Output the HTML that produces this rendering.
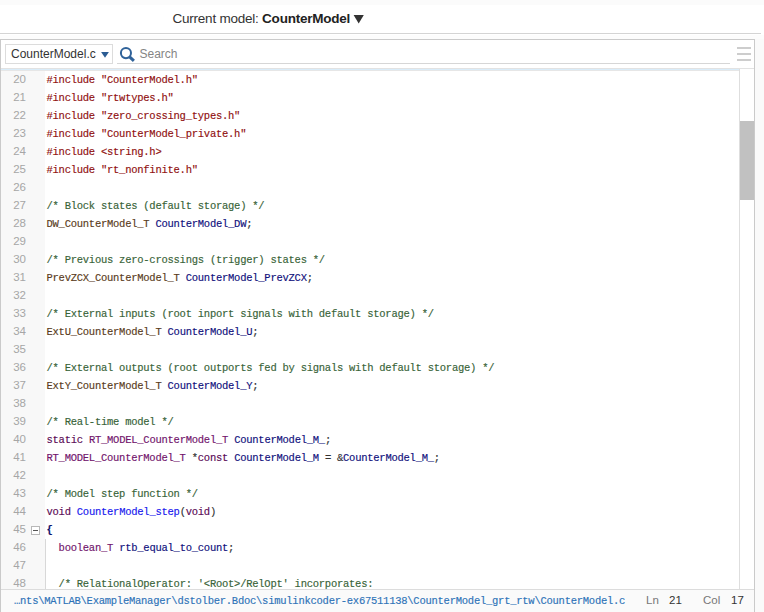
<!DOCTYPE html>
<html><head><meta charset="utf-8"><title>Code View</title>
<style>
html,body{margin:0;padding:0;}
body{width:764px;height:612px;overflow:hidden;background:#fff;position:relative;font-family:"Liberation Sans",sans-serif;}
.abs{position:absolute;}
#topband{left:0;top:0;width:764px;height:5px;background:#fbfbfb;}
#title{left:172.5px;top:11px;font-size:13.5px;letter-spacing:-0.23px;line-height:16px;color:#333;white-space:nowrap;}
#title b{color:#222;}
#hr1{left:0;top:33px;width:761px;height:1px;background:#d4d4d4;}
#band2{left:0;top:35px;width:764px;height:4px;background:#fcfcfc;}
#rightbg{left:755px;top:39px;width:9px;height:573px;background:#fafafa;}
#panel{left:0;top:39px;width:753px;height:580px;border:1px solid #cacaca;background:#fff;}
#sel{left:5px;top:44px;width:106px;height:18px;border:1px solid #dcdcdc;background:#fff;}
#seltx{left:11px;top:47px;font-size:12px;line-height:15px;color:#333;white-space:nowrap;}
#search{left:139.5px;top:47px;font-size:12px;line-height:15px;color:#858585;}
#sline{left:117px;top:63px;width:613px;height:1px;background:#d6d6d6;}
.hb{left:737px;width:14px;height:2px;background:#cdcdcd;}
#tb1{left:1px;top:68px;width:753px;height:1px;background:#e2e2e2;}
#tb2{left:1px;top:69px;width:738px;height:1px;background:#d9ecf9;}
#tb3{left:1px;top:70px;width:738px;height:1px;background:#e6e6e6;}
#gutter{left:1px;top:71px;width:44px;height:518px;background:#f8f8f8;}
#vr{left:739px;top:69px;width:1px;height:521px;background:#dedede;}
#thumb{left:740px;top:121px;width:14px;height:79px;background:#c1c1c1;}
#bl{left:1px;top:589px;width:753px;height:1px;background:#dcdcdc;}
#status{left:1px;top:590px;width:753px;height:22px;background:#fafafa;}
#code{left:1px;top:70.5px;width:738px;height:519px;overflow:hidden;}
.ln{position:relative;height:18px;line-height:18px;white-space:pre;}
.no{position:absolute;left:0;top:-1px;width:25px;text-align:right;font-family:"Liberation Sans",sans-serif;font-size:11.5px;color:#a6a6a6;}
.tx{position:absolute;left:45.5px;font-family:"Liberation Mono",monospace;font-size:10.5px;letter-spacing:-0.25px;-webkit-text-stroke:0.15px currentColor;}
.pp{color:#900f0f;}
.cm{color:#386338;}
.ty{color:#5a3c1c;}
.va{color:#10107c;}
.pl{color:#333;}
.br{color:#10106a;font-weight:bold;}
.kw{color:#5a0a56;}
.fn{color:#1818ee;}
.bt{color:#72146c;}
#fold{left:31px;top:526px;width:7px;height:7px;border:1px solid #b8b8b8;background:#fff;}
#foldm{left:33px;top:530px;width:5px;height:1px;background:#555;}
#guide{left:45px;top:539px;width:1px;height:50px;background:#d8d8d8;}
#path{left:14px;top:594px;font-family:"Liberation Mono",monospace;font-size:10.5px;letter-spacing:-0.25px;line-height:14px;color:#2e73b8;white-space:pre;-webkit-text-stroke:0.15px currentColor;}
.st{top:593px;font-size:11.5px;line-height:15px;white-space:nowrap;}
.sg{color:#777;}
.sd{color:#333;}
</style></head><body>
<div class="abs" id="topband"></div>
<div class="abs" id="title">Current model: <b>CounterModel</b></div>
<svg class="abs" style="left:353px;top:14px" width="12" height="10" viewBox="0 0 12 10"><path d="M0.6 1 L10.8 1 L5.7 9.4 Z" fill="#333"/></svg>
<div class="abs" id="hr1"></div>
<div class="abs" id="band2"></div>
<div class="abs" id="rightbg"></div>
<div class="abs" id="panel"></div>
<div class="abs" id="sel"></div>
<div class="abs" id="seltx">CounterModel.c</div>
<svg class="abs" style="left:100px;top:50px" width="10" height="9" viewBox="0 0 10 9"><path d="M1.1 2 L8.9 2 L5 7.8 Z" fill="#2b5c93"/></svg>
<svg class="abs" style="left:118px;top:45px" width="18" height="18" viewBox="0 0 18 18"><circle cx="7.95" cy="8.1" r="5.05" fill="none" stroke="#2f6299" stroke-width="2"/><path d="M11.6 11.8 L15.9 15.9" stroke="#2f6299" stroke-width="3" stroke-linecap="butt"/></svg>
<div class="abs" id="search">Search</div>
<div class="abs" id="sline"></div>
<div class="abs hb" style="top:47px"></div>
<div class="abs hb" style="top:53px"></div>
<div class="abs hb" style="top:59px"></div>
<div class="abs" id="tb1"></div>
<div class="abs" id="tb2"></div>
<div class="abs" id="tb3"></div>
<div class="abs" id="gutter"></div>
<div class="abs" id="code">
<div class="ln"><span class="no">20</span><span class="tx"><span class="pp">#include "CounterModel.h"</span></span></div>
<div class="ln"><span class="no">21</span><span class="tx"><span class="pp">#include "rtwtypes.h"</span></span></div>
<div class="ln"><span class="no">22</span><span class="tx"><span class="pp">#include "zero_crossing_types.h"</span></span></div>
<div class="ln"><span class="no">23</span><span class="tx"><span class="pp">#include "CounterModel_private.h"</span></span></div>
<div class="ln"><span class="no">24</span><span class="tx"><span class="pp">#include &lt;string.h&gt;</span></span></div>
<div class="ln"><span class="no">25</span><span class="tx"><span class="pp">#include "rt_nonfinite.h"</span></span></div>
<div class="ln"><span class="no">26</span><span class="tx"></span></div>
<div class="ln"><span class="no">27</span><span class="tx"><span class="cm">/* Block states (default storage) */</span></span></div>
<div class="ln"><span class="no">28</span><span class="tx"><span class="ty">DW_CounterModel_T</span><span class="pl"> </span><span class="va">CounterModel_DW</span><span class="pl">;</span></span></div>
<div class="ln"><span class="no">29</span><span class="tx"></span></div>
<div class="ln"><span class="no">30</span><span class="tx"><span class="cm">/* Previous zero-crossings (trigger) states */</span></span></div>
<div class="ln"><span class="no">31</span><span class="tx"><span class="ty">PrevZCX_CounterModel_T</span><span class="pl"> </span><span class="va">CounterModel_PrevZCX</span><span class="pl">;</span></span></div>
<div class="ln"><span class="no">32</span><span class="tx"></span></div>
<div class="ln"><span class="no">33</span><span class="tx"><span class="cm">/* External inputs (root inport signals with default storage) */</span></span></div>
<div class="ln"><span class="no">34</span><span class="tx"><span class="ty">ExtU_CounterModel_T</span><span class="pl"> </span><span class="va">CounterModel_U</span><span class="pl">;</span></span></div>
<div class="ln"><span class="no">35</span><span class="tx"></span></div>
<div class="ln"><span class="no">36</span><span class="tx"><span class="cm">/* External outputs (root outports fed by signals with default storage) */</span></span></div>
<div class="ln"><span class="no">37</span><span class="tx"><span class="ty">ExtY_CounterModel_T</span><span class="pl"> </span><span class="va">CounterModel_Y</span><span class="pl">;</span></span></div>
<div class="ln"><span class="no">38</span><span class="tx"></span></div>
<div class="ln"><span class="no">39</span><span class="tx"><span class="cm">/* Real-time model */</span></span></div>
<div class="ln"><span class="no">40</span><span class="tx"><span class="kw">static</span><span class="pl"> </span><span class="bt">RT_MODEL_CounterModel_T</span><span class="pl"> </span><span class="va">CounterModel_M_</span><span class="pl">;</span></span></div>
<div class="ln"><span class="no">41</span><span class="tx"><span class="bt">RT_MODEL_CounterModel_T</span><span class="pl"> *</span><span class="kw">const</span><span class="pl"> </span><span class="va">CounterModel_M</span><span class="pl"> = &amp;</span><span class="va">CounterModel_M_</span><span class="pl">;</span></span></div>
<div class="ln"><span class="no">42</span><span class="tx"></span></div>
<div class="ln"><span class="no">43</span><span class="tx"><span class="cm">/* Model step function */</span></span></div>
<div class="ln"><span class="no">44</span><span class="tx"><span class="kw">void</span><span class="pl"> </span><span class="fn">CounterModel_step</span><span class="pl">(</span><span class="kw">void</span><span class="pl">)</span></span></div>
<div class="ln"><span class="no">45</span><span class="tx"><span class="br">{</span></span></div>
<div class="ln"><span class="no">46</span><span class="tx"><span class="pl">  </span><span class="bt">boolean_T</span><span class="pl"> </span><span class="va">rtb_equal_to_count</span><span class="pl">;</span></span></div>
<div class="ln"><span class="no">47</span><span class="tx"></span></div>
<div class="ln"><span class="no">48</span><span class="tx"><span class="pl">  </span><span class="cm">/* RelationalOperator: '&lt;Root&gt;/RelOpt' incorporates:</span></span></div>
</div>
<div class="abs" id="vr"></div>
<div class="abs" id="thumb"></div>
<div class="abs" id="fold"></div>
<div class="abs" id="foldm"></div>
<div class="abs" id="guide"></div>
<div class="abs" id="bl"></div>
<div class="abs" id="status"></div>
<div class="abs" id="path">…nts\MATLAB\ExampleManager\dstolber.Bdoc\simulinkcoder-ex67511138\CounterModel_grt_rtw\CounterModel.c</div>
<div class="abs st sg" style="left:646px">Ln</div>
<div class="abs st sd" style="left:669px">21</div>
<div class="abs st sg" style="left:703px">Col</div>
<div class="abs st sd" style="left:731px">17</div>
</body></html>
